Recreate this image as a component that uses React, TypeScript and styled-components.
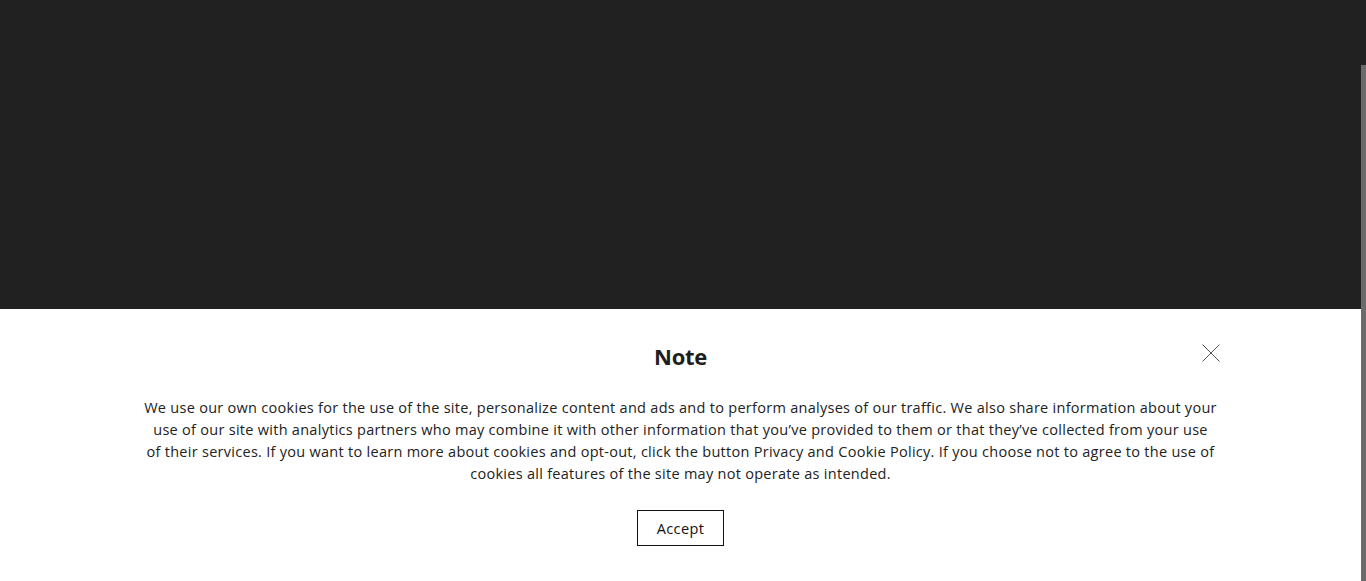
import React from "react";
import styled, { createGlobalStyle } from "styled-components";

const Global = createGlobalStyle`
  html, body { margin: 0; padding: 0; background: #212121; overflow: hidden; }
  * { box-sizing: border-box; }
`;

const Shell = styled.div`
  display: grid;
  grid-template-columns: 1fr 5px;
  height: 581px;
  width: 1366px;
  background: #212121;
`;

const Main = styled.div`
  display: flex;
  flex-direction: column;
  min-width: 0;
`;

const Dark = styled.div`
  flex: 1;
  background: #212121;
`;

const Track = styled.div`
  background: #212121;
  display: flex;
  flex-direction: column;
`;

const Thumb = styled.div`
  margin-top: 65px;
  flex: 1;
  background: #6b6b6b;
`;

const Banner = styled.section`
  position: relative;
  height: 272px;
  background: #ffffff;
  display: flex;
  flex-direction: column;
  align-items: center;
  padding-top: 32px;
  font-family: "Open Sans", "Liberation Sans", sans-serif;
  color: #222222;
`;

const Title = styled.h2`
  margin: 0;
  font-size: 22px;
  line-height: 30px;
  font-weight: 700;
  color: #1e1e1e;
  letter-spacing: -0.3px;
`;

const Text = styled.p`
  margin: 26px 0 0;
  font-size: 14.5px;
  line-height: 22px;
  text-align: center;
  color: #222222;
  letter-spacing: 0.28px;
  white-space: nowrap;
`;

const Accept = styled.button`
  margin-top: 25px;
  width: 87px;
  height: 36px;
  background: #fff;
  border: 1px solid #111;
  font-family: inherit;
  font-size: 14.5px;
  color: #111;
  letter-spacing: 0.4px;
  cursor: pointer;
`;

const Close = styled.button`
  position: absolute;
  top: 33px;
  left: 1200px;
  width: 22px;
  height: 22px;
  padding: 0;
  background: none;
  border: none;
  display: flex;
  align-items: center;
  justify-content: center;
  cursor: pointer;
`;

const lines = [
  "We use our own cookies for the use of the site, personalize content and ads and to perform analyses of our traffic. We also share information about your",
  "use of our site with analytics partners who may combine it with other information that you\u2019ve provided to them or that they\u2019ve collected from your use",
  "of their services. If you want to learn more about cookies and opt-out, click the button Privacy and Cookie Policy. If you choose not to agree to the use of",
  "cookies all features of the site may not operate as intended.",
];

export default function App() {
  return (
    <>
      <Global />
      <Shell>
        <Main>
          <Dark />
          <Banner>
            <Close aria-label="Close">
              <svg width="20" height="20" viewBox="0 0 20 20">
                <path d="M1.5 1.5 L18.5 18.5 M18.5 1.5 L1.5 18.5" stroke="#555" strokeWidth="1" fill="none" />
              </svg>
            </Close>
            <Title>Note</Title>
            <Text>
              {lines.map((l, i) => (
                <React.Fragment key={i}>
                  {l}
                  {i < lines.length - 1 && <br />}
                </React.Fragment>
              ))}
            </Text>
            <Accept>Accept</Accept>
          </Banner>
        </Main>
        <Track>
          <Thumb />
        </Track>
      </Shell>
    </>
  );
}
